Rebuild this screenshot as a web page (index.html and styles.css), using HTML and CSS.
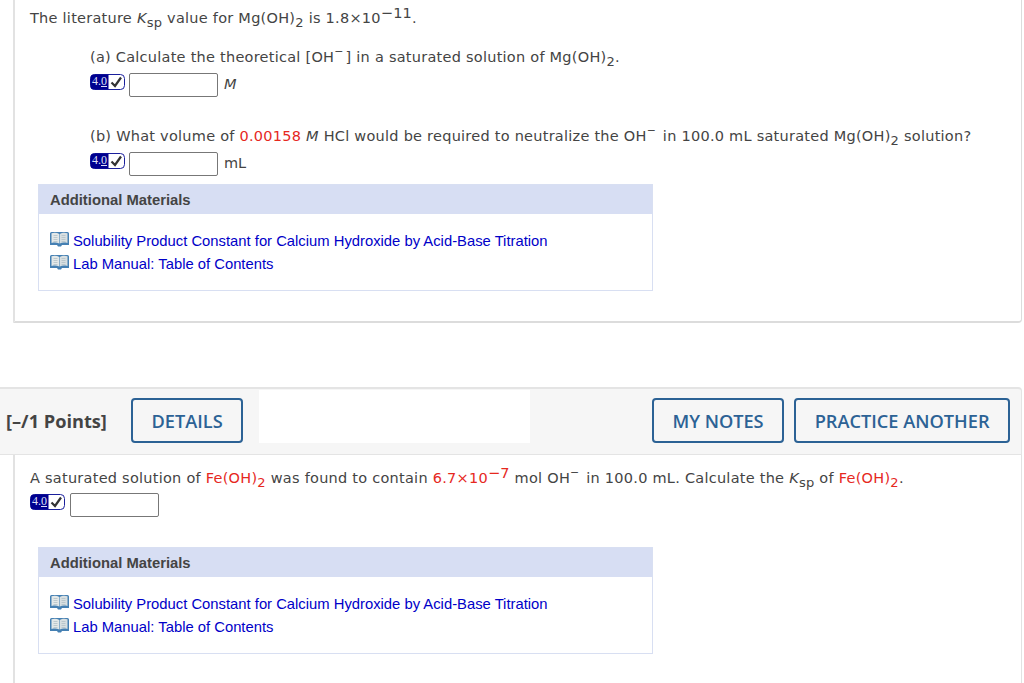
FILE: index.html
```html
<!DOCTYPE html>
<html lang="en">
<head>
<meta charset="utf-8">
<title>Questions</title>
<link rel="stylesheet" href="styles.css">
</head>
<body>
<svg class="defs" width="0" height="0" aria-hidden="true">
  <defs>
    <symbol id="book" viewBox="0 0 19 16">
      <path d="M0 2.500q0-1.500 1.500-1.500h16q1.500 0 1.500 1.500v11.500h-7l-1 1.500h-3l-1-1.500h-7z" fill="#4580b3"/>
      <path d="M1.500 2.200c2.700-0.900 5.500-0.700 7.800 0.800v9.500c-2.300-1.200-5.100-1.200-7.800-0.500z" fill="#e3e8e8"/>
      <path d="M17.500 2.200c-2.700-0.900-5.500-0.700-7.700 0.800v9.500c2.200-1.200 5-1.200 7.700-0.500z" fill="#d8dfe1"/>
      <path d="M3.500 4.500h4M3.500 6.500h4M3.500 8.500h4M3.500 10.500h4M11.500 4.500h4M11.500 6.500h4M11.500 8.500h4M11.500 10.500h4" stroke="#b3c0c7" stroke-width="0.800"/>
    </symbol>
    <symbol id="badge" viewBox="0 0 35 16">
      <rect x="0.500" y="0.500" width="34" height="15" rx="4" fill="#fff" stroke="#1a1f9c"/>
      <path d="M4 0.500h14.500v15h-14.500a3.500 3.500 0 0 1-3.500-3.500v-8a3.500 3.500 0 0 1 3.500-3.500z" fill="#00008f"/>
      <path d="M21.500 8.500l3.500 3.500 6-8.500" fill="none" stroke="#333" stroke-width="2.200"/>
    </symbol>
  </defs>
</svg>
<main class="page">
  <section class="card card-first">
    <p class="line">The literature <i>K</i><sub>sp</sub> value for Mg(OH)<sub>2</sub> is 1.8×10<sup>−11</sup>.</p>
    <div class="part part-a">
      <p class="line">(a) Calculate the theoretical [OH<sup class="minus">−</sup>] in a saturated solution of Mg(OH)<sub>2</sub>.</p>
      <div class="answer">
        <span class="badge"><svg width="35" height="16"><use href="#badge"/></svg><span class="score">4.<u>0</u></span></span>
        <span class="field"></span>
        <i class="unit">M</i>
      </div>
    </div>
    <div class="part part-b">
      <p class="line">(b) What volume of <span class="red">0.00158</span> <i>M</i> HCl would be required to neutralize the OH<sup class="minus">−</sup> in 100.0 mL saturated Mg(OH)<sub>2</sub> solution?</p>
      <div class="answer">
        <span class="badge"><svg width="35" height="16"><use href="#badge"/></svg><span class="score">4.<u>0</u></span></span>
        <span class="field"></span>
        <span class="unit">mL</span>
      </div>
    </div>
    <aside class="materials">
      <h3 class="materials-title">Additional Materials</h3>
      <ul class="materials-list">
        <li><svg class="book" width="19" height="16"><use href="#book"/></svg><a href="#">Solubility Product Constant for Calcium Hydroxide by Acid-Base Titration</a></li>
        <li><svg class="book" width="19" height="16"><use href="#book"/></svg><a href="#">Lab Manual: Table of Contents</a></li>
      </ul>
    </aside>
  </section>

  <header class="bar">
    <strong class="points">[–/1 Points]</strong>
    <a class="btn" href="#">DETAILS</a>
    <div class="blank"></div>
    <a class="btn btn-notes" href="#">MY NOTES</a>
    <a class="btn" href="#">PRACTICE ANOTHER</a>
  </header>
  <section class="card card-second">
    <p class="line">A saturated solution of <span class="red">Fe(OH)<sub>2</sub></span> was found to contain <span class="red">6.7×10<sup>−7</sup></span> mol OH<sup class="minus">−</sup> in 100.0 mL. Calculate the <i>K</i><sub>sp</sub> of <span class="red">Fe(OH)<sub>2</sub></span>.</p>
    <div class="answer">
      <span class="badge"><svg width="35" height="16"><use href="#badge"/></svg><span class="score">4.<u>0</u></span></span>
      <span class="field"></span>
    </div>
    <aside class="materials materials-second">
      <h3 class="materials-title">Additional Materials</h3>
      <ul class="materials-list">
        <li><svg class="book" width="19" height="16"><use href="#book"/></svg><a href="#">Solubility Product Constant for Calcium Hydroxide by Acid-Base Titration</a></li>
        <li><svg class="book" width="19" height="16"><use href="#book"/></svg><a href="#">Lab Manual: Table of Contents</a></li>
      </ul>
    </aside>
  </section>
</main>
</body>
</html>
```

FILE: styles.css
```css
html, body {
  margin: 0;
  padding: 0;
  background: #fff;
  overflow: hidden;
}
body {
  width: 1024px;
  height: 683px;
  color: #444;
  font-family: "DejaVu Sans", Verdana, sans-serif;
  font-size: 14.500px;
}
.defs { position: absolute; }
.page { display: flex; flex-direction: column; }
.card {
  margin-left: 13px;
  width: 1009px;
  box-sizing: border-box;
  padding-left: 15px;
  border-left: 2px solid #e2e2e2;
}
.card-first {
  height: 323px;
  padding-top: 7px;
  border-right: 1px solid #dcdcdc;
  border-bottom: 2px solid #dcdcdc;
  border-bottom-right-radius: 4px;
}
.card-second {
  padding-top: 12px;
  height: 228px;
  border-right: 1px solid #e2e2e2;
}
.line {
  margin: 0;
  height: 22px;
  line-height: 22px;
  letter-spacing: 0.250px;
  white-space: nowrap;
}
sub, sup {
  line-height: 0;
}
sub { font-size: 0.9em; vertical-align: -0.3em; }
sup { vertical-align: 0.35em; font-size: 1em; }
sup.minus { font-size: 0.75em; vertical-align: 0.6em; margin-right: 2px; }
.red { color: #e6281e; }
.part { margin-left: 60px; }
.part-a { margin-top: 17px; }
.part-b { margin-top: 28px; }
.answer {
  display: flex;
  align-items: flex-start;
  height: 24px;
  margin-top: 5px;
}
.card-second .answer { margin-top: 4px; }
.part .badge { margin-right: 4px; }
.badge {
  position: relative;
  display: block;
  width: 35px;
  height: 16px;
  margin: 1px 5px 0 0;
}
.badge svg { display: block; }
.score {
  position: absolute;
  left: 1px;
  top: 1px;
  width: 17px;
  text-align: center;
  color: #dfe0f5;
  font-family: "Liberation Serif", serif;
  font-size: 12px;
  line-height: 13px;
}
.field {
  display: block;
  box-sizing: border-box;
  width: 89px;
  height: 24px;
  border: 1px solid #777;
  border-radius: 2px;
  background: #fff;
}
.unit {
  margin-left: 6px;
  line-height: 23px;
}
.materials {
  width: 615px;
  box-sizing: border-box;
  margin: 8px 0 0 8px;
  height: 107px;
  border: 1px solid #d8dff2;
  font-family: "Liberation Sans", Arial, sans-serif;
}
.materials-second { margin-top: 30px; }
.materials-title {
  margin: 0;
  height: 29px;
  padding-left: 11px;
  background: #d7def3;
  color: #444;
  font-size: 14.800px;
  font-weight: 700;
  line-height: 31px;
}
.materials-list {
  list-style: none;
  margin: 0;
  padding: 15px 0 0 11px;
}
.materials-list li {
  display: flex;
  align-items: center;
  height: 23px;
}
.book { margin-right: 4px; flex: none; position: relative; top: -2px; }
.materials-list a {
  color: #0000c8;
  font-size: 14.800px;
  text-decoration: none;
}
.bar {
  display: flex;
  align-items: flex-start;
  box-sizing: border-box;
  margin-top: 64px;
  width: 1022px;
  height: 68px;
  padding: 1px 11px 0 6px;
  background: #f6f6f6;
  border: 1px solid #e4e4e4;
  border-width: 2px 1px 1px 0;
  border-top-right-radius: 4px;
  font-family: "Open Sans", sans-serif;
}
.points {
  width: 125px;
  margin-top: 8px;
  color: #444;
  font-size: 18.200px;
  font-weight: 700;
  line-height: 46px;
}
.btn {
  display: block;
  box-sizing: border-box;
  height: 45px;
  margin-top: 8px;
  padding: 0 18.500px;
  border: 2px solid #2c6295;
  border-radius: 4px;
  background: #f6f6f6;
  color: #2c6295;
  font-size: 18.200px;
  font-weight: 600;
  line-height: 42px;
  text-decoration: none;
  white-space: nowrap;
}
.blank {
  width: 271px;
  height: 53px;
  margin-left: 15.500px;
  background: #fff;
}
.btn-notes {
  margin-left: auto;
  margin-right: 10px;
}
```
